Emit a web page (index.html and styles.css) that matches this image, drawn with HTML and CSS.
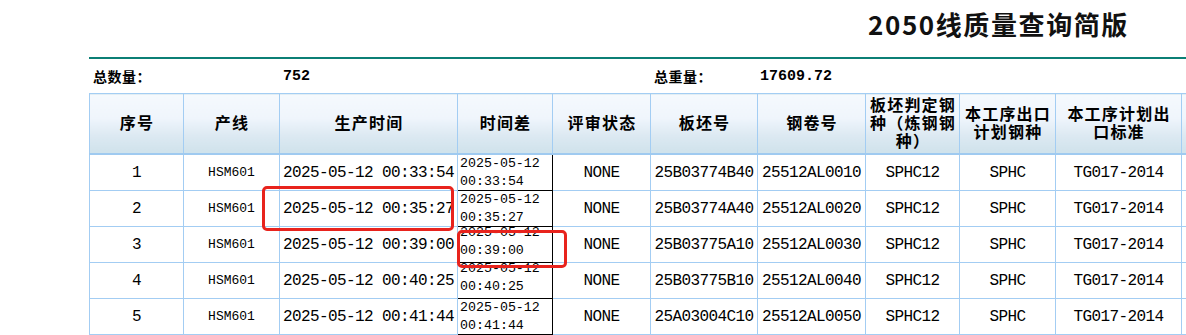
FILE: index.html
```html
<!DOCTYPE html>
<html lang="zh">
<head>
<meta charset="utf-8">
<title>2050线质量查询简版</title>
<link rel="stylesheet" href="styles.css">
</head>
<body>
<div class="page">
  <h1 class="title">2050线质量查询简版</h1>
  <div class="rule"></div>
  <div class="summary">
    <span class="sum-label">总数量：</span>
    <span class="sum-value sum-count">752</span>
    <span class="sum-label sum-label-b">总重量：</span>
    <span class="sum-value">17609.72</span>
  </div>
  <table class="grid">
    <colgroup>
      <col class="c1"><col class="c2"><col class="c3"><col class="c4"><col class="c5">
      <col class="c6"><col class="c7"><col class="c8"><col class="c9"><col class="c10"><col class="c11">
    </colgroup>
    <thead>
      <tr>
        <th>序号</th><th>产线</th><th>生产时间</th><th>时间差</th><th>评审状态</th>
        <th>板坯号</th><th>钢卷号</th><th>板坯判定钢<br>种（炼钢钢<br>种）</th><th>本工序出口<br>计划钢种</th><th>本工序计划出<br>口标准</th><th></th>
      </tr>
    </thead>
    <tbody>
      <tr>
        <td>1</td><td class="line">HSM601</td><td>2025-05-12 00:33:54</td>
        <td class="diff"><div class="diff-box">2025-05-12<br>00:33:54</div></td>
        <td>NONE</td><td>25B03774B40</td><td>25512AL0010</td><td>SPHC12</td><td>SPHC</td><td>TG017-2014</td><td></td>
      </tr>
      <tr>
        <td>2</td><td class="line">HSM601</td><td>2025-05-12 00:35:27</td>
        <td class="diff"><div class="diff-box">2025-05-12<br>00:35:27</div></td>
        <td>NONE</td><td>25B03774A40</td><td>25512AL0020</td><td>SPHC12</td><td>SPHC</td><td>TG017-2014</td><td></td>
      </tr>
      <tr>
        <td>3</td><td class="line">HSM601</td><td>2025-05-12 00:39:00</td>
        <td class="diff"><div class="diff-box raised">2025-05-12<br>00:39:00</div></td>
        <td>NONE</td><td>25B03775A10</td><td>25512AL0030</td><td>SPHC12</td><td>SPHC</td><td>TG017-2014</td><td></td>
      </tr>
      <tr>
        <td>4</td><td class="line">HSM601</td><td>2025-05-12 00:40:25</td>
        <td class="diff"><div class="diff-box raised">2025-05-12<br>00:40:25</div></td>
        <td>NONE</td><td>25B03775B10</td><td>25512AL0040</td><td>SPHC12</td><td>SPHC</td><td>TG017-2014</td><td></td>
      </tr>
      <tr>
        <td>5</td><td class="line">HSM601</td><td>2025-05-12 00:41:44</td>
        <td class="diff"><div class="diff-box">2025-05-12<br>00:41:44</div></td>
        <td>NONE</td><td>25A03004C10</td><td>25512AL0050</td><td>SPHC12</td><td>SPHC</td><td>TG017-2014</td><td></td>
      </tr>
    </tbody>
  </table>
  <div class="mark mark-a"></div>
  <div class="mark mark-b"></div>
</div>
</body>
</html>
```

FILE: styles.css
```css
html, body {
  margin: 0;
  padding: 0;
  background: #ffffff;
  overflow: hidden;
}

.page {
  position: relative;
  width: 1186px;
  height: 335px;
  overflow: hidden;
  font-family: "Noto Sans CJK SC", sans-serif;
  color: #000;
}

.title {
  margin: 0;
  height: 57px;
  box-sizing: border-box;
  padding: 9px 0 0 868px;
  font-size: 26px;
  line-height: 30px;
  font-weight: 700;
  letter-spacing: 1.6px;
  color: #111;
  white-space: nowrap;
}

.rule {
  margin-left: 89px;
  height: 2px;
  background: #0b7f75;
}

.summary {
  display: flex;
  height: 34px;
  align-items: center;
  padding-left: 93px;
  font-size: 14px;
  font-weight: 700;
}

.sum-label {
  width: 190px;
  letter-spacing: 0.5px;
}

.sum-label-b {
  width: 106px;
}

.sum-count {
  width: 371px;
}

.sum-value {
  font-family: "Liberation Mono", monospace;
  font-size: 15px;
  font-weight: 700;
}

.grid {
  margin-left: 89px;
  border-collapse: collapse;
  table-layout: fixed;
  width: 1193px;
}

.c1 { width: 94px; }
.c2 { width: 96px; }
.c3 { width: 178px; }
.c4 { width: 95px; }
.c5 { width: 98px; }
.c6 { width: 107px; }
.c7 { width: 108px; }
.c8 { width: 94px; }
.c9 { width: 96px; }
.c10 { width: 126px; }
.c11 { width: 101px; }

.grid th,
.grid td {
  border: 1px solid #a3cdf3;
  padding: 0;
  text-align: center;
  vertical-align: middle;
  overflow: hidden;
}

.grid th {
  height: 59px;
  border-bottom: 2px solid #9fcaf0;
  background: linear-gradient(#f5f9fd 0%, #eff5fc 40%, #dce9f2 70%, #cfe2eb 100%);
  font-family: "Liberation Sans", "Noto Sans CJK SC", sans-serif;
  font-size: 16px;
  font-weight: 700;
  line-height: 18px;
  letter-spacing: 1.2px;
  padding: 0 0 0 1px;
  white-space: nowrap;
}

.grid td {
  height: 35px;
  font-family: "Liberation Mono", monospace;
  font-size: 16px;
  letter-spacing: -0.6px;
  white-space: nowrap;
}

.grid td.line {
  font-size: 13px;
  letter-spacing: 0;
}

.grid td.diff {
  border: 1px solid #000;
  vertical-align: top;
  text-align: left;
  letter-spacing: 0;
}

.diff-box {
  height: 35px;
  overflow: hidden;
  font-size: 13.3px;
  line-height: 18px;
  padding: 0 0 0 2px;
}

.diff-box.raised {
  margin-top: -3px;
  height: 38px;
}

.mark {
  position: absolute;
  border: 3px solid #e8231d;
  border-radius: 5px;
  box-sizing: border-box;
}

.mark-a {
  left: 262px;
  top: 186px;
  width: 192px;
  height: 45px;
}

.mark-b {
  left: 457px;
  top: 230px;
  width: 110px;
  height: 38px;
}
```
